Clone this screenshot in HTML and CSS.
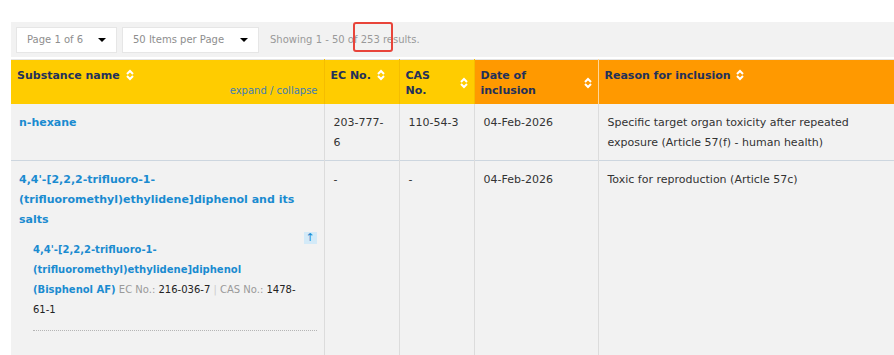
FILE: index.html
```html
<!DOCTYPE html>
<html>
<head>
    <meta charset="utf-8">
    <title>Candidate List</title>
    <link rel="stylesheet" href="styles.css">
</head>
<body>

<div class="page">
    <div class="pager">
        <div class="select select-page">
            <span>Page 1 of 6</span>
            <i class="caret"></i>
        </div>
        <div class="select select-items">
            <span>50 Items per Page</span>
            <i class="caret"></i>
        </div>
        <span class="showing">Showing 1 - 50 of 253 results.</span>
        <div class="mark"></div>
    </div>

    <table class="results">
        <colgroup>
            <col style="width:313px">
            <col style="width:75px">
            <col style="width:75px">
            <col style="width:124px">
            <col>
        </colgroup>
        <thead>
            <tr>
                <th class="yellow">
                    <div class="th-title">Substance name <svg class="sort"><use xlink:href="#sort"></use></svg></div>
                    <a class="expand" href="#">expand / collapse</a>
                </th>
                <th class="yellow">
                    <div class="th-title">EC No. <svg class="sort"><use xlink:href="#sort"></use></svg></div>
                </th>
                <th class="yellow">
                    <div class="th-split">
                        <span>CAS<br>No.</span>
                        <svg class="sort"><use xlink:href="#sort"></use></svg>
                    </div>
                </th>
                <th class="orange">
                    <div class="th-split">
                        <span>Date of<br>inclusion</span>
                        <svg class="sort"><use xlink:href="#sort"></use></svg>
                    </div>
                </th>
                <th class="orange">
                    <div class="th-title">Reason for inclusion <svg class="sort"><use xlink:href="#sort"></use></svg></div>
                </th>
            </tr>
        </thead>
        <tbody>
            <tr>
                <td><a class="name" href="#">n-hexane</a></td>
                <td>203-777-<br>6</td>
                <td>110-54-3</td>
                <td>04-Feb-2026</td>
                <td>Specific target organ toxicity after repeated exposure (Article 57(f) - human health)</td>
            </tr>
            <tr class="tall">
                <td>
                    <a class="name" href="#">4,4'-[2,2,2-trifluoro-1-(trifluoromethyl)ethylidene]diphenol and its salts</a>
                    <div class="children">
                        <span class="collapse-btn">&#8593;</span>
                        <div class="child">
                            <a class="child-name" href="#">4,4'-[2,2,2-trifluoro-1-(trifluoromethyl)ethylidene]diphenol (Bisphenol AF)</a>
                            <span class="lbl">EC No.:</span> 216-036-7 <span class="sep">|</span> <span class="lbl">CAS No.:</span> 1478-61-1
                        </div>
                    </div>
                </td>
                <td>-</td>
                <td>-</td>
                <td>04-Feb-2026</td>
                <td>Toxic for reproduction (Article 57c)</td>
            </tr>
        </tbody>
    </table>
</div>

<svg width="0" height="0" style="position:absolute;display:none;">
    <defs>
        <symbol viewBox="0 0 8 12" id="sort"><path d="M1 5 L4 2 L7 5 M1 7 L4 10 L7 7" fill="none" stroke="#fff" stroke-width="2"></path></symbol>
    </defs>
</svg>

</body>
</html>
```

FILE: styles.css
```css
body {
    margin:0;
    font-family:"DejaVu Sans", Verdana, sans-serif;
    font-size:11px;
    color:#333;
    background:#fff;
    overflow:hidden;
}
.page {
    padding:22px 0 0 11px;
}
.pager {
    position:relative;
    display:flex;
    align-items:center;
    height:35px;
    padding:0 5px;
    background:#f2f2f2;
    margin-bottom:2px;
    font-size:10px;
    color:#999;
}
.select {
    display:flex;
    align-items:center;
    justify-content:space-between;
    box-sizing:border-box;
    height:26px;
    padding:0 10px 0 10px;
    margin-right:5px;
    background:#fff;
    border:1px solid #e6e6e6;
    color:#8e8e8e;
}
.select-page {width:101px;}
.select-items {width:137px;}
.caret {
    width:0;height:0;
    border-left:4px solid transparent;
    border-right:4px solid transparent;
    border-top:4px solid #000;
}
.showing {margin-left:6px;}
.mark {
    position:absolute;
    left:342px;
    top:0;
    width:36px;
    height:26px;
    border:2px solid #e8443a;
    border-radius:3px;
}

.results {
    width:884px;
    table-layout:fixed;
    border-collapse:collapse;
    border-top:1px solid #e4e4e4;
}
.results th {
    height:44px;
    box-sizing:border-box;
    padding:8px 6px 6px;
    vertical-align:top;
    text-align:left;
    font-size:11px;
    font-weight:bold;
    line-height:15px;
    color:#23305a;
}
.results th.yellow {background:#ffcc00; border-right:1px solid #f5bd00;}
.results th.orange {background:#ff9900; border-left:1px solid #ffd79a;}
.th-title {white-space:nowrap;}
.th-split {
    display:flex;
    align-items:center;
    justify-content:space-between;
}
.sort {
    width:8px;height:12px;
    vertical-align:-2px;
    margin-left:2px;
}
.expand {
    display:block;
    text-align:right;
    font-weight:normal;
    font-size:10px;
    color:#3f7db4;
    text-decoration:none;
}

.results td {
    padding:9px 9px 7px;
    vertical-align:top;
    line-height:20px;
    background:#f2f2f2;
    border-left:1px solid #dcdcdc;
    border-right:1px solid #dcdcdc;
}
.results td:first-child {padding-left:8px; border-left:0;}
.results tbody tr {border-bottom:1px solid #cdd6df;}
.results tr.tall td {padding-bottom:40px;}
.name {
    color:#1a8bd0;
    font-weight:bold;
    line-height:19px;
    text-decoration:none;
}
.children {padding:0 0 0 14px;}
.collapse-btn {
    float:right;
    width:13px;height:12px;
    margin:2px -2px 0 0;
    background:#d3eaf8;
    color:#1a8bd0;
    font-size:11px;
    line-height:12px;
    text-align:center;
}
.child {
    padding:10px 20px 10px 0;
    font-size:10px;
    color:#222;
    border-bottom:1px dotted #b5b5b5;
    margin-right:-2px;
}
.child-name {
    color:#1a8bd0;
    font-weight:bold;
    text-decoration:none;
}
.lbl {color:#9a9a9a;}
.sep {color:#ccc;}
```
